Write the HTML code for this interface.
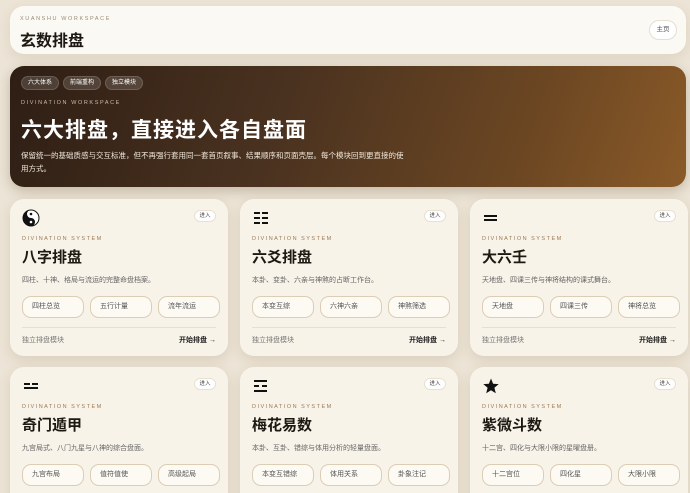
<!DOCTYPE html>
<html style="height:493px;overflow:hidden"><head><meta charset="utf-8"><style>
*{box-sizing:border-box;margin:0;padding:0}
body{width:690px;height:493px;overflow:hidden;background:#ece4d6;font-family:"Liberation Sans","Noto Sans CJK SC",sans-serif;position:relative;color:#1e1812}
.hdr{position:absolute;left:10px;top:6px;width:676px;height:48px;background:#fbf9f4;border-radius:14px;box-shadow:0 4px 12px rgba(120,90,50,.12)}
.hdr .k{position:absolute;left:10px;top:10px;font-size:5.5px;letter-spacing:1.6px;color:#9a8b78}
.hdr .t{position:absolute;left:10px;top:21px;font-size:16px;font-weight:700}
.hdr .b{position:absolute;right:9px;top:14px;width:28px;height:20px;border-radius:10px;border:1px solid #e6dfd2;background:#fff;font-size:6.5px;text-align:center;line-height:18px;color:#555}
.hero{position:absolute;left:10px;top:66px;width:676px;height:121px;border-radius:14px;background:linear-gradient(110deg,#2e1e14 0%,#4a3220 40%,#6b4622 75%,#8a5a28 100%);color:#fff;box-shadow:0 4px 12px rgba(80,50,20,.25)}
.tags{position:absolute;left:11px;top:10px;display:flex;gap:4px}
.tags span{font-size:6px;padding:0 6px;height:14px;line-height:13px;border-radius:7px;background:rgba(255,255,255,.14);border:1px solid rgba(255,255,255,.15)}
.hero .k{position:absolute;left:11px;top:34px;font-size:5.5px;letter-spacing:1.6px;color:#cbbba8}
.hero h1{position:absolute;left:11px;top:48px;font-size:21px;font-weight:700;letter-spacing:1px}
.hero p{position:absolute;left:11px;top:83px;width:384px;font-size:7.5px;line-height:13px;color:#f0e8dc}
.card{position:absolute;width:218px;height:157px;background:#f8f3e9;border-radius:14px;box-shadow:0 4px 12px rgba(120,90,50,.15)}
.ic{position:absolute;left:12px;top:10px;width:18px;height:18px}
.go{position:absolute;right:12px;top:11px;width:22px;height:12px;border-radius:6px;background:#fff;border:1px solid #e8e0d2;font-size:5.5px;text-align:center;line-height:10px;color:#444}
.card .k{position:absolute;left:12px;top:37px;font-size:5.5px;letter-spacing:1.5px;color:#9a7a55}
.card h2{position:absolute;left:12px;top:47px;font-size:15px;font-weight:700}
.card .d{position:absolute;left:12px;top:76px;font-size:7px;color:#666}
.chips{position:absolute;left:12px;top:97px;display:flex;gap:6px}
.chips span{width:62px;height:22px;border-radius:9px;border:1px solid #dccdb5;background:#fdfaf4;font-size:7px;line-height:20px;padding-left:9px;color:#555}
.line{position:absolute;left:12px;right:12px;top:128px;border-top:1px solid #e8dfcf}
.f1{position:absolute;left:12px;top:136px;font-size:7px;color:#777}
.f2{position:absolute;right:12px;top:136px;font-size:7px;font-weight:700;color:#222}
</style></head><body>
<div class="hdr"><div class="k">XUANSHU WORKSPACE</div><div class="t">玄数排盘</div><div class="b">主页</div></div>
<div class="hero"><div class="tags"><span>六大体系</span><span>前端重构</span><span>独立模块</span></div>
<div class="k">DIVINATION WORKSPACE</div><h1>六大排盘，直接进入各自盘面</h1>
<p>保留统一的基础质感与交互标准，但不再强行套用同一套首页叙事、结果顺序和页面壳层。每个模块回到更直接的使用方式。</p></div>

<div class="card" style="left:10px;top:199px"><svg class="ic" viewBox="0 0 18 18"><circle cx="9" cy="9" r="8" fill="#fff" stroke="#111" stroke-width="1"/><path d="M9 1A8 8 0 0 0 9 17A4 4 0 0 0 9 9A4 4 0 0 1 9 1z" fill="#111"/><circle cx="9" cy="5" r="1.3" fill="#111"/><circle cx="9" cy="13" r="1.3" fill="#fff"/></svg><div class="go">进入</div><div class="k">DIVINATION SYSTEM</div><h2>八字排盘</h2><div class="d">四柱、十神、格局与流运的完整命盘档案。</div><div class="chips"><span>四柱总览</span><span>五行计量</span><span>流年流运</span></div><div class="line"></div><div class="f1">独立排盘模块</div><div class="f2">开始排盘 →</div></div>
<div class="card" style="left:240px;top:199px"><svg class="ic" viewBox="0 0 18 18" fill="#111"><rect x="2" y="3" width="6" height="2"/><rect x="10" y="3" width="6" height="2"/><rect x="2" y="8" width="6" height="2"/><rect x="10" y="8" width="6" height="2"/><rect x="2" y="13" width="6" height="2"/><rect x="10" y="13" width="6" height="2"/></svg><div class="go">进入</div><div class="k">DIVINATION SYSTEM</div><h2>六爻排盘</h2><div class="d">本卦、变卦、六亲与神煞的占断工作台。</div><div class="chips"><span>本变互综</span><span>六神六亲</span><span>神煞筛选</span></div><div class="line"></div><div class="f1">独立排盘模块</div><div class="f2">开始排盘 →</div></div>
<div class="card" style="left:470px;top:199px"><svg class="ic" viewBox="0 0 18 18" fill="#111"><rect x="2" y="6" width="13" height="2"/><rect x="2" y="10" width="13" height="2"/></svg><div class="go">进入</div><div class="k">DIVINATION SYSTEM</div><h2>大六壬</h2><div class="d">天地盘、四课三传与神将结构的课式舞台。</div><div class="chips"><span>天地盘</span><span>四课三传</span><span>神将总览</span></div><div class="line"></div><div class="f1">独立排盘模块</div><div class="f2">开始排盘 →</div></div>

<div class="card" style="left:10px;top:367px"><svg class="ic" viewBox="0 0 18 18" fill="#111"><rect x="2" y="6" width="6" height="2"/><rect x="10" y="6" width="6" height="2"/><rect x="2" y="10" width="14" height="2"/></svg><div class="go">进入</div><div class="k">DIVINATION SYSTEM</div><h2>奇门遁甲</h2><div class="d">九宫局式、八门九星与八神的综合盘面。</div><div class="chips"><span>九宫布局</span><span>值符值使</span><span>高级起局</span></div></div>
<div class="card" style="left:240px;top:367px"><svg class="ic" viewBox="0 0 18 18" fill="#111"><rect x="2" y="3" width="13" height="2"/><rect x="2" y="8" width="5" height="2"/><rect x="10" y="8" width="5" height="2"/><rect x="2" y="13" width="13" height="2"/></svg><div class="go">进入</div><div class="k">DIVINATION SYSTEM</div><h2>梅花易数</h2><div class="d">本卦、互卦、错综与体用分析的轻量盘面。</div><div class="chips"><span>本变互错综</span><span>体用关系</span><span>卦象注记</span></div></div>
<div class="card" style="left:470px;top:367px"><svg class="ic" viewBox="0 0 18 18" fill="#111"><path d="M9 1.5l2.1 5.2 5.6.4-4.3 3.6 1.4 5.5L9 13.2l-4.8 3 1.4-5.5L1.3 7.1l5.6-.4z"/></svg><div class="go">进入</div><div class="k">DIVINATION SYSTEM</div><h2>紫微斗数</h2><div class="d">十二宫、四化与大限小限的星曜盘册。</div><div class="chips"><span>十二宫位</span><span>四化星</span><span>大限小限</span></div></div>
</body></html>
